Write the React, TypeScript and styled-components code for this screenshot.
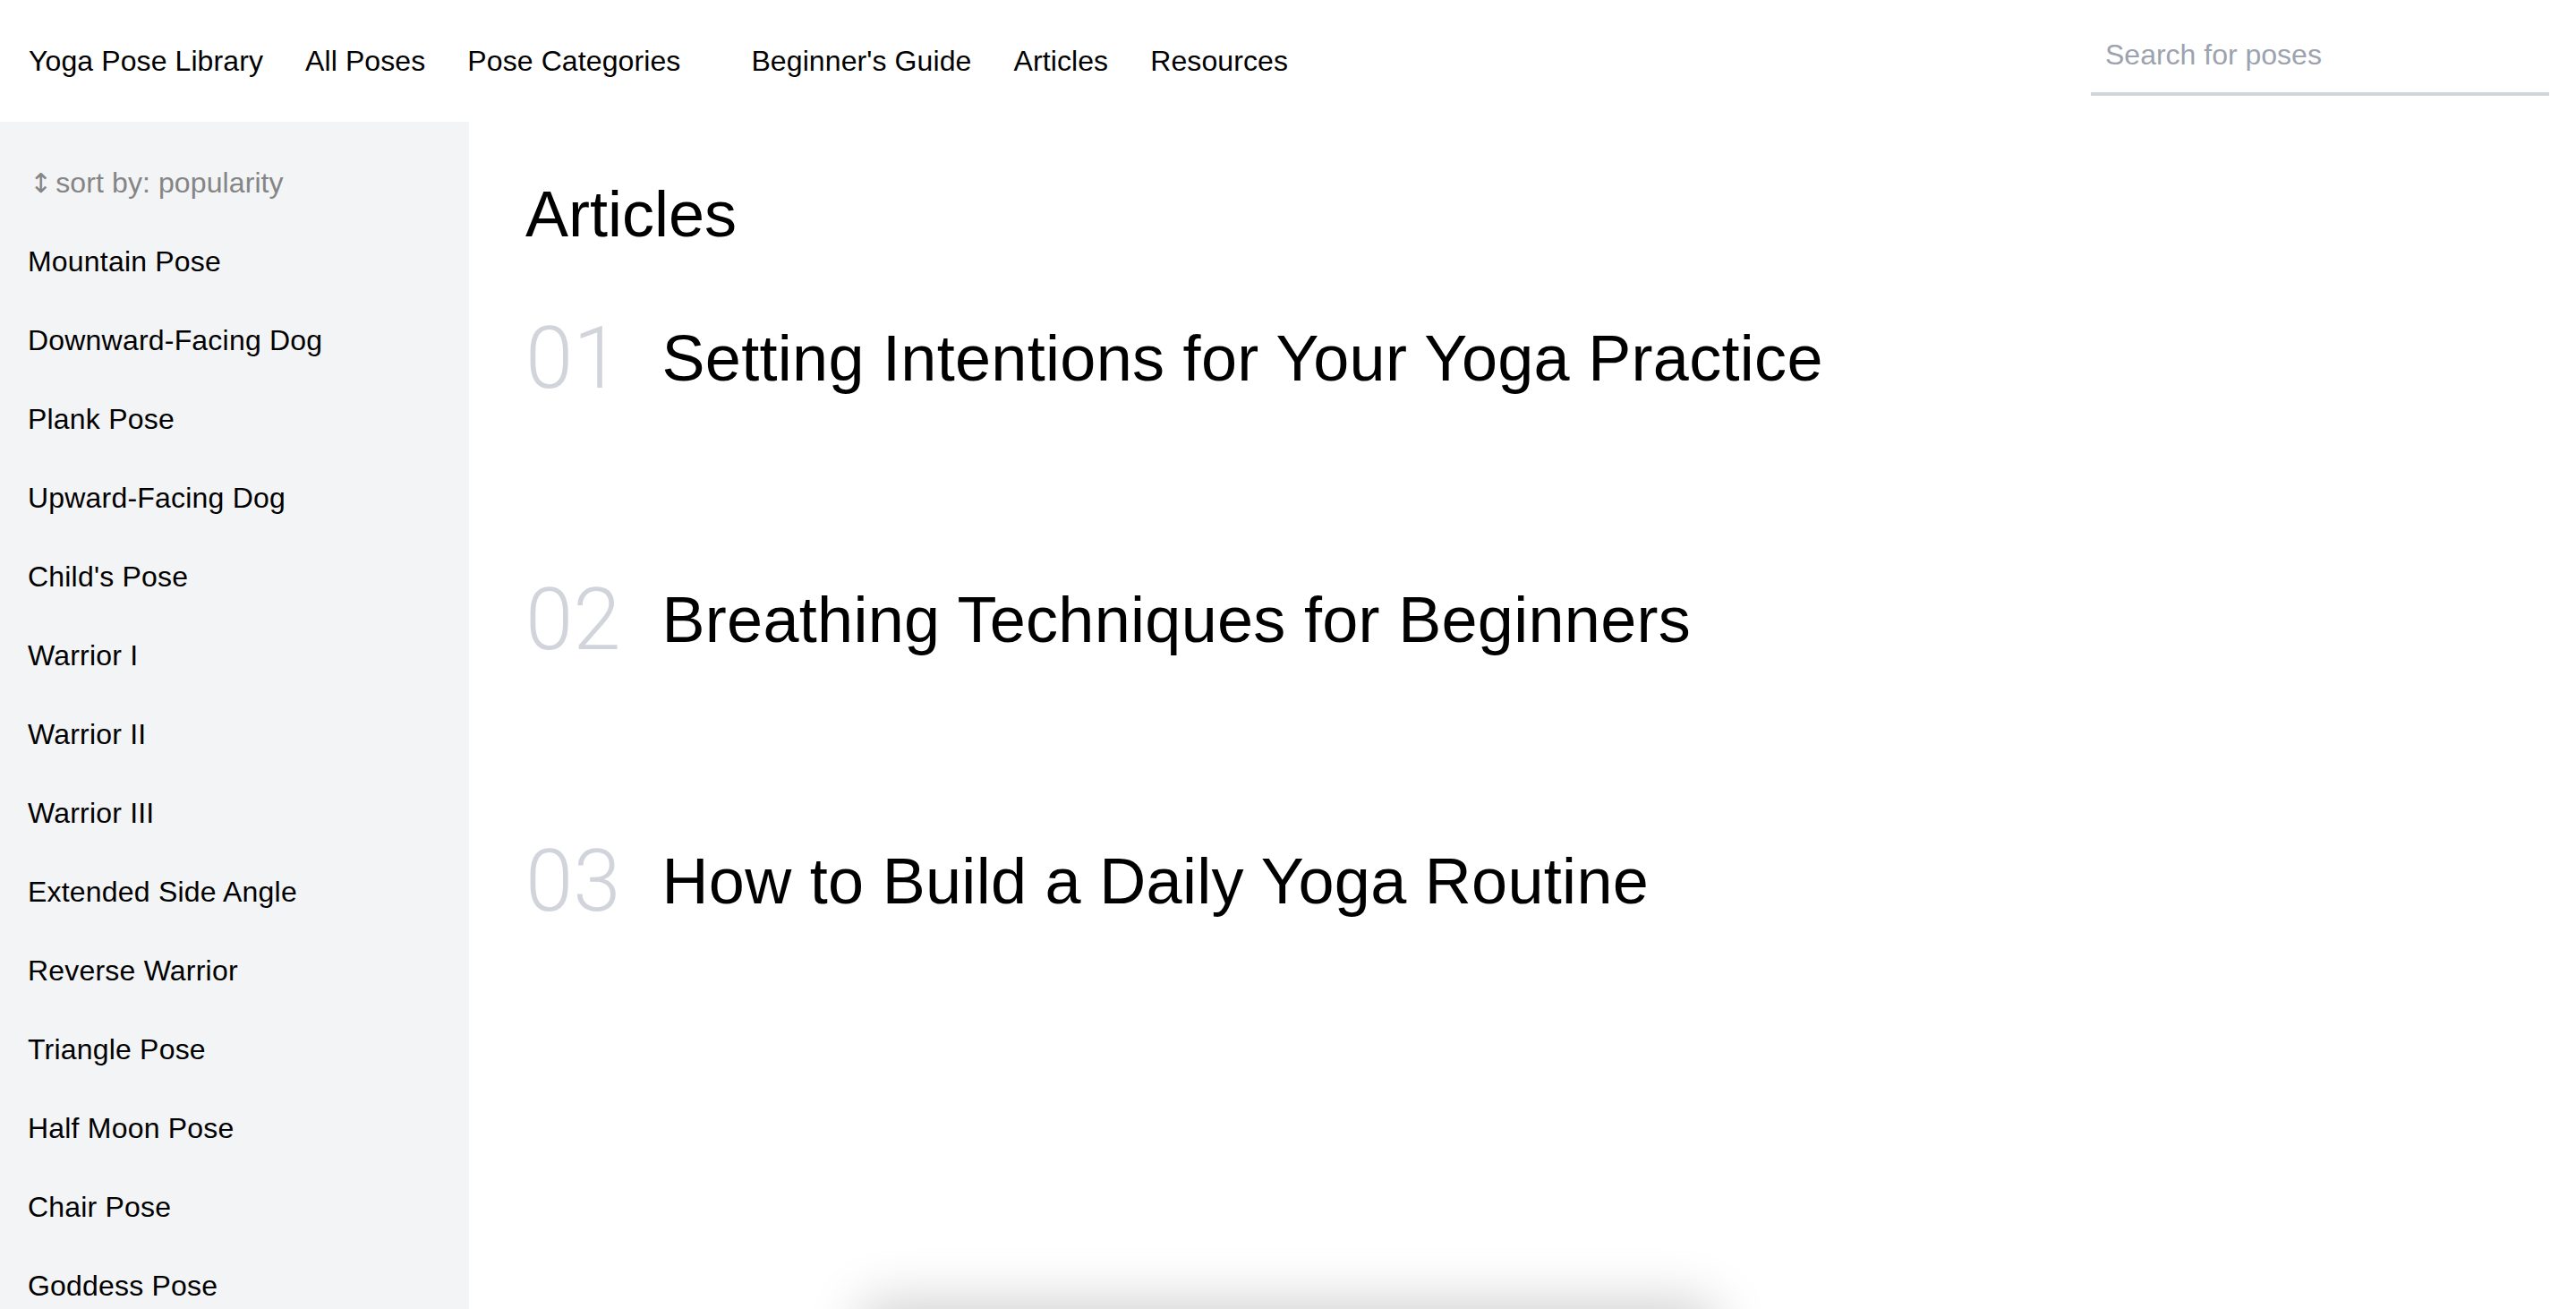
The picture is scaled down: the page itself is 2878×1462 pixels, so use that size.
import styled, { createGlobalStyle } from "styled-components";

const GlobalStyle = createGlobalStyle`
  html, body {
    margin: 0;
    padding: 0;
    height: 100%;
    background: #ffffff;
  }
  body {
    font-family: "Liberation Sans", Arial, Helvetica, sans-serif;
    color: #000;
    overflow: hidden;
  }
  * {
    box-sizing: border-box;
  }
`;

const navLinks = [
  "Yoga Pose Library",
  "All Poses",
  "Pose Categories",
  "Beginner's Guide",
  "Articles",
  "Resources",
];

const poses = [
  "Mountain Pose",
  "Downward-Facing Dog",
  "Plank Pose",
  "Upward-Facing Dog",
  "Child's Pose",
  "Warrior I",
  "Warrior II",
  "Warrior III",
  "Extended Side Angle",
  "Reverse Warrior",
  "Triangle Pose",
  "Half Moon Pose",
  "Chair Pose",
  "Goddess Pose",
  "Tree Pose",
  "Bridge Pose",
];

const articles = [
  "Setting Intentions for Your Yoga Practice",
  "Breathing Techniques for Beginners",
  "How to Build a Daily Yoga Routine",
];

const App = () => {
  return (
    <>
      <GlobalStyle />
      <Page>
        <Header>
          <Nav>
            {navLinks.map((link, i) => (
              <NavLink key={link} href="#" $wide={i === 2}>
                {link}
              </NavLink>
            ))}
          </Nav>
          <SearchInput type="text" placeholder="Search for poses" />
        </Header>
        <Body>
          <Sidebar>
            <SortLabel>
              <SortArrow>↕</SortArrow>
              sort by: popularity
            </SortLabel>
            <PoseList>
              {poses.map((pose) => (
                <PoseItem key={pose}>{pose}</PoseItem>
              ))}
            </PoseList>
          </Sidebar>
          <Main>
            <Heading>Articles</Heading>
            <ArticleList>
              {articles.map((title, i) => (
                <ArticleRow key={title}>
                  <ArticleNumber>{String(i + 1).padStart(2, "0")}</ArticleNumber>
                  <ArticleTitle href="#">{title}</ArticleTitle>
                </ArticleRow>
              ))}
            </ArticleList>
          </Main>
        </Body>
        <FloatingBar />
      </Page>
    </>
  );
};

const Page = styled.div`
  display: flex;
  flex-direction: column;
  height: 100vh;
`;

const Header = styled.header`
  display: flex;
  align-items: center;
  justify-content: space-between;
  height: 136px;
  flex-shrink: 0;
  padding: 0 30px 0 32px;
`;

const Nav = styled.nav`
  display: flex;
  align-items: center;
  gap: 47px;
`;

const NavLink = styled.a<{ $wide?: boolean }>`
  font-size: 32px;
  letter-spacing: 0.1px;
  color: #000;
  text-decoration: none;
  white-space: nowrap;
  margin-right: ${(props) => (props.$wide ? "32px" : "0")};
`;

const SearchInput = styled.input`
  width: 512px;
  height: 88px;
  margin-bottom: 10px;
  padding: 0 16px;
  border: none;
  border-bottom: 4px solid #d1d5db;
  outline: none;
  background: transparent;
  font-family: inherit;
  font-size: 32px;
  color: #111;
  &::placeholder {
    color: #9ca3af;
  }
`;

const Body = styled.div`
  display: flex;
  flex: 1;
  min-height: 0;
`;

const Sidebar = styled.aside`
  width: 524px;
  flex-shrink: 0;
  background: #f3f4f6;
  padding-top: 24px;
  overflow: hidden;
`;

const SortLabel = styled.div`
  display: flex;
  align-items: center;
  height: 88px;
  padding-left: 33px;
  font-size: 32px;
  letter-spacing: 0.1px;
  color: #858585;
  white-space: nowrap;
`;

const SortArrow = styled.span`
  font-family: "DejaVu Sans", sans-serif;
  font-size: 30px;
  margin-right: 4px;
`;

const PoseList = styled.ul`
  list-style: none;
  margin: 0;
  padding: 0;
`;

const PoseItem = styled.li`
  display: flex;
  align-items: center;
  height: 88px;
  padding-left: 31px;
  font-size: 32px;
  letter-spacing: 0.2px;
  color: #000;
  white-space: nowrap;
`;

const Main = styled.main`
  flex: 1;
  padding: 67px 0 0 63px;
`;

const Heading = styled.h1`
  margin: 0;
  font-size: 72px;
  font-weight: 400;
  line-height: 1;
`;

const ArticleList = styled.div`
  display: flex;
  flex-direction: column;
  gap: 196px;
  margin-top: 77px;
`;

const ArticleRow = styled.div`
  display: flex;
  align-items: center;
  gap: 46px;
`;

const ArticleNumber = styled.span`
  font-family: Roboto, "Liberation Sans", sans-serif;
  font-weight: 300;
  font-size: 96px;
  line-height: 1;
  color: #d1d5db;
`;

const ArticleTitle = styled.a`
  font-size: 72px;
  letter-spacing: 0.3px;
  line-height: 1;
  color: #000;
  text-decoration: none;
  white-space: nowrap;
`;

const FloatingBar = styled.div`
  position: fixed;
  left: 50%;
  transform: translateX(-50%);
  top: calc(100vh + 10px);
  width: 960px;
  height: 120px;
  border-radius: 28px;
  background: #fff;
  box-shadow: 0 -20px 60px rgba(0, 0, 0, 0.18);
`;

export default App;
